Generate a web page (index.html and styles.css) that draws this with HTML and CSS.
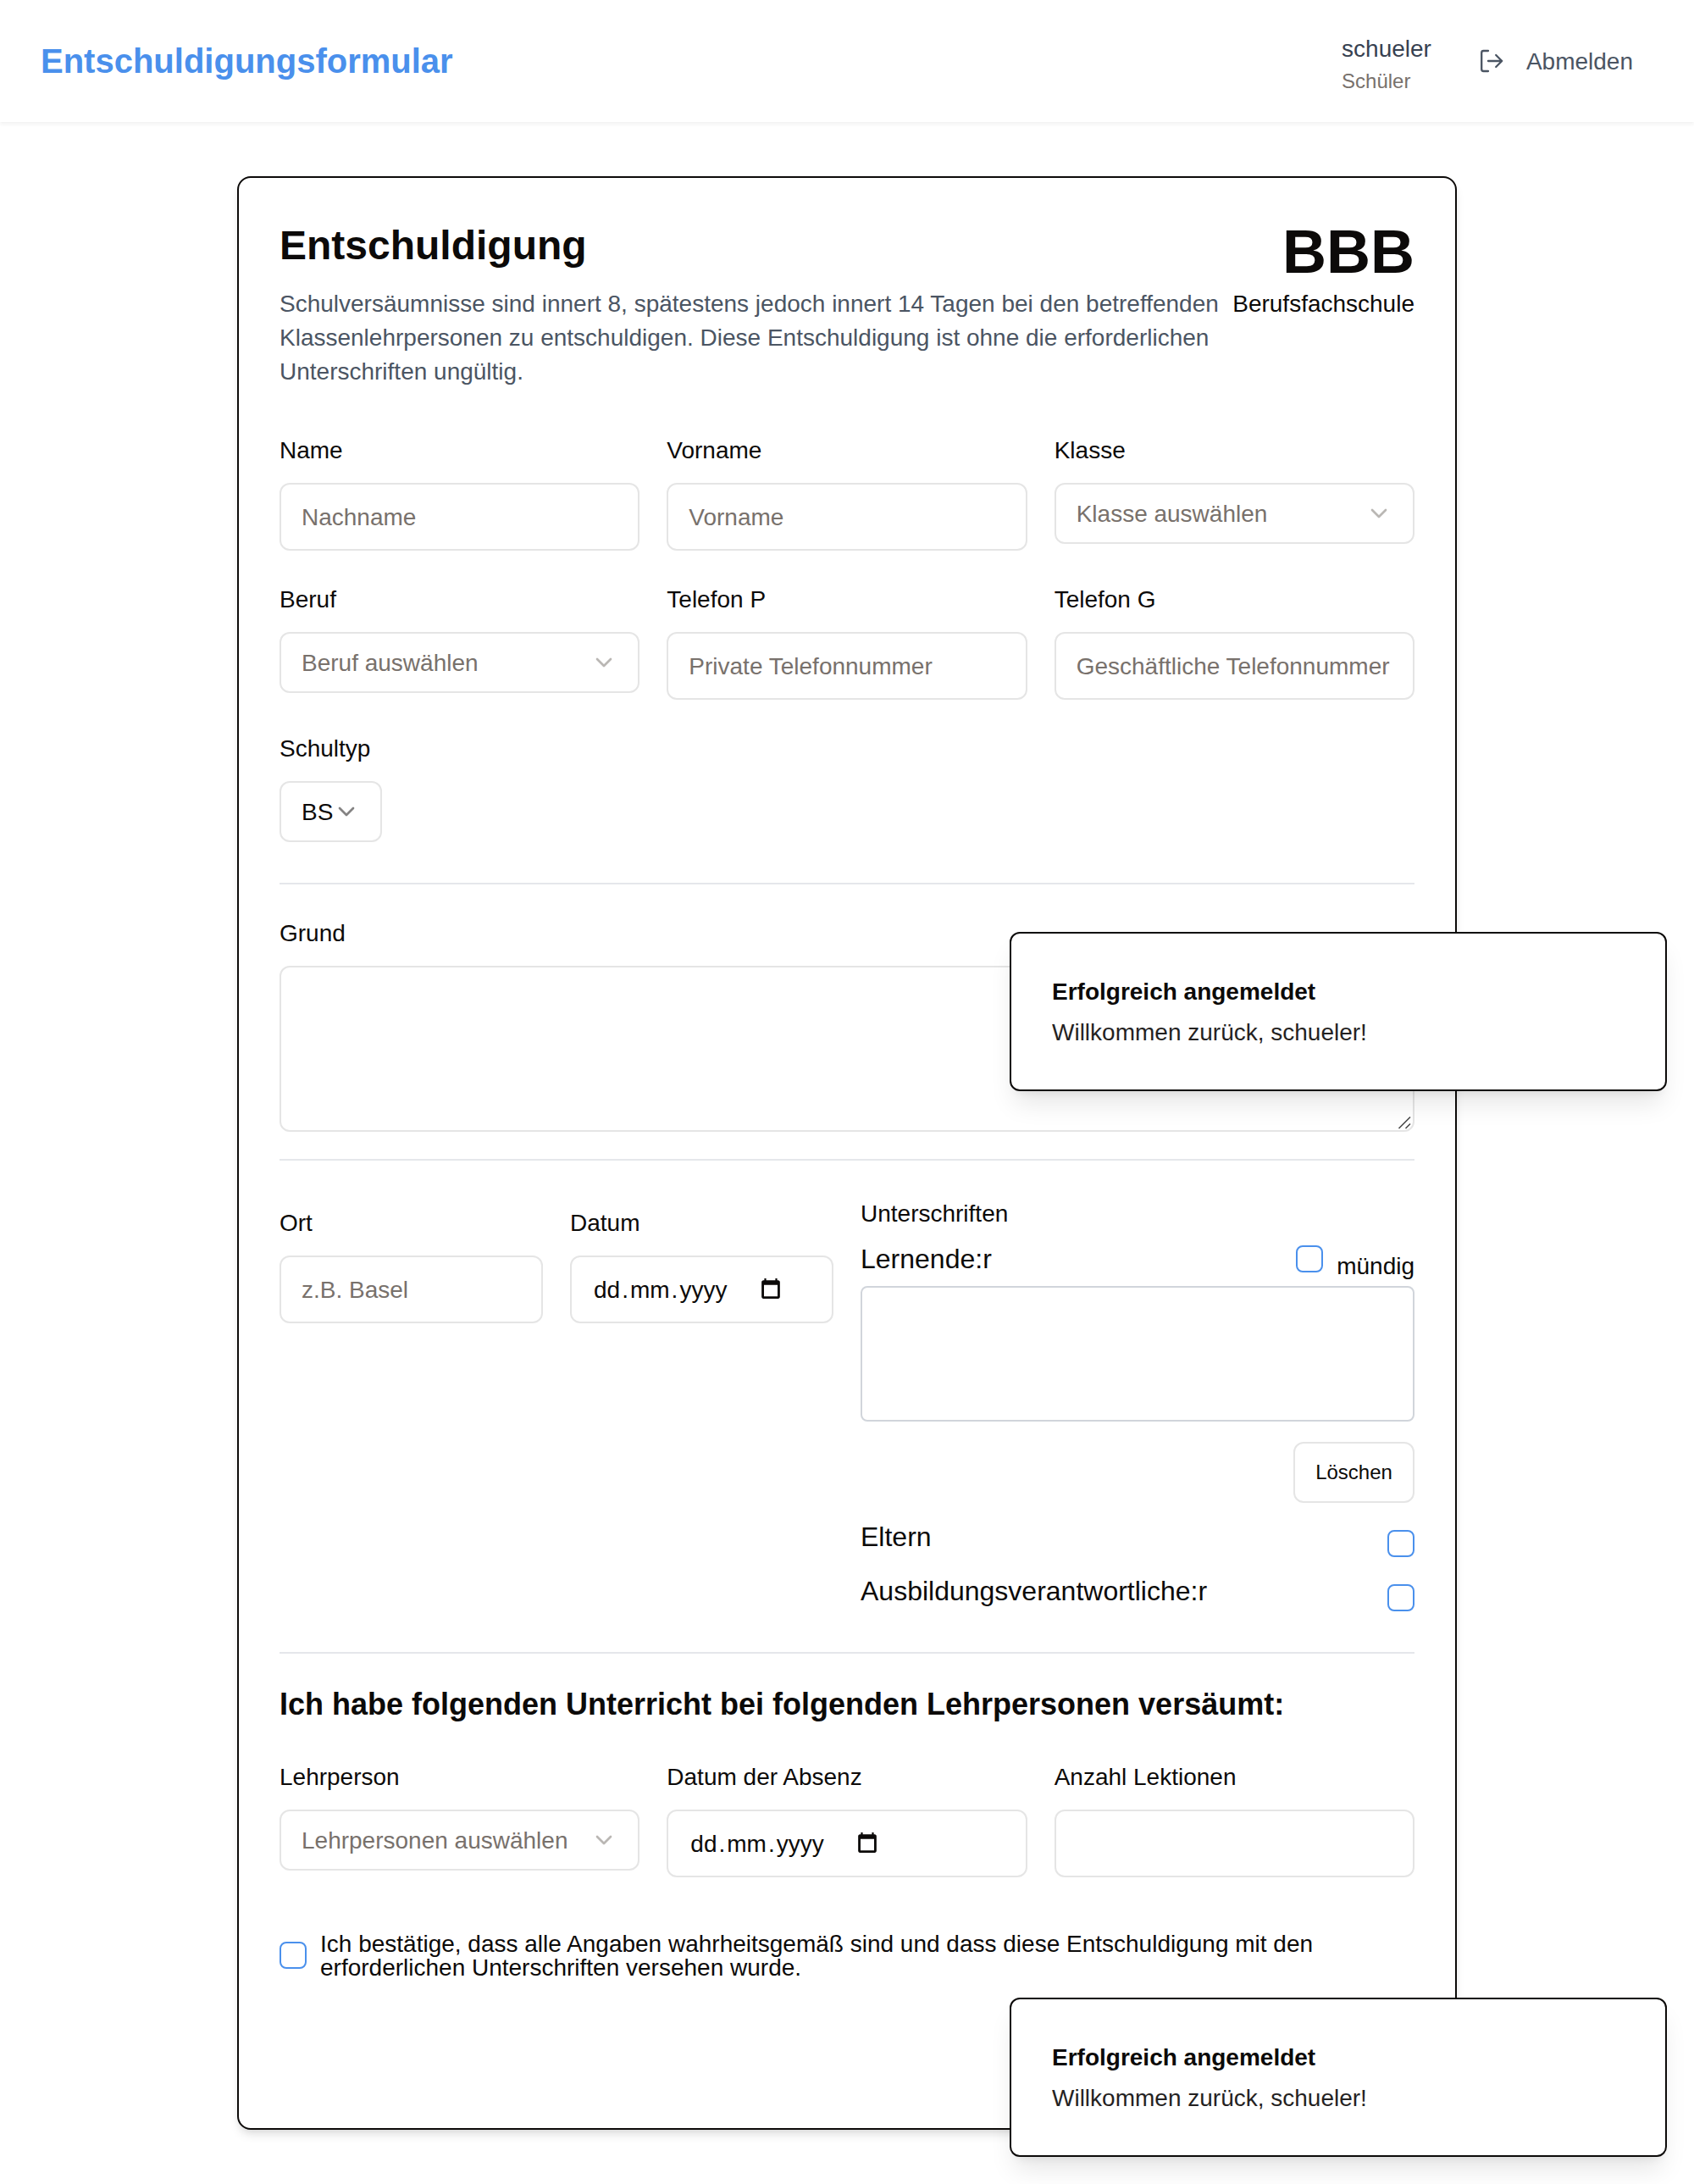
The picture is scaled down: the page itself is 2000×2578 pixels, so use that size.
FILE: index.html
```html
<!DOCTYPE html>
<html lang="de">
<head>
<meta charset="utf-8">
<title>Entschuldigungsformular</title>
<link rel="stylesheet" href="styles.css">
</head>
<body>
<svg class="sprite" width="0" height="0" aria-hidden="true">
  <symbol id="chevron" viewBox="0 0 24 24"><path d="m6 9 6 6 6-6" fill="none" stroke="currentColor" stroke-width="2" stroke-linecap="round" stroke-linejoin="round"/></symbol>
  <symbol id="calendar" viewBox="0 0 24 24"><path fill="currentColor" d="M20 3h-1V1h-2v2H7V1H5v2H4c-1.100 0-2 .9-2 2v16c0 1.100.9 2 2 2h16c1.100 0 2-.9 2-2V5c0-1.100-.9-2-2-2zm-.6 17.600H4.600V8h14.800v12.600z"/></symbol>
</svg>
<header class="topbar">
  <h1 class="brand">Entschuldigungsformular</h1>
  <div class="account">
    <div class="user"><span class="user-name">schueler</span><span class="user-role">Schüler</span></div>
    <button class="logout">
      <svg class="logout-icon" viewBox="0 0 32 32"><path fill="none" stroke="currentColor" stroke-width="2.300" stroke-linecap="round" stroke-linejoin="round" d="M11 4H5.500Q3.200 4 3.200 6.300V25.700Q3.200 28 5.500 28H11M11 16H27.200M20.200 9l7 7-7 7"/></svg>
      <span>Abmelden</span>
    </button>
  </div>
</header>

<main class="card">
  <div class="card-head">
    <div class="intro">
      <h2 class="title">Entschuldigung</h2>
      <p class="lead">Schulversäumnisse sind innert 8, spätestens jedoch innert 14 Tagen bei den betreffenden Klassenlehrpersonen zu entschuldigen. Diese Entschuldigung ist ohne die erforderlichen Unterschriften ungültig.</p>
    </div>
    <div class="school"><div class="school-logo">BBB</div><div class="school-name">Berufsfachschule</div></div>
  </div>

  <section class="grid three first">
    <div class="field"><div class="label"><label>Name</label></div><div class="input muted">Nachname</div></div>
    <div class="field"><div class="label"><label>Vorname</label></div><div class="input muted">Vorname</div></div>
    <div class="field"><div class="label"><label>Klasse</label></div><div class="select muted"><span>Klasse auswählen</span><svg class="chevron"><use href="#chevron"/></svg></div></div>
    <div class="field"><div class="label"><label>Beruf</label></div><div class="select muted"><span>Beruf auswählen</span><svg class="chevron"><use href="#chevron"/></svg></div></div>
    <div class="field"><div class="label"><label>Telefon P</label></div><div class="input muted">Private Telefonnummer</div></div>
    <div class="field"><div class="label"><label>Telefon G</label></div><div class="input muted">Geschäftliche Telefonnummer</div></div>
    <div class="field"><div class="label"><label>Schultyp</label></div><div class="select fit"><span>BS</span><svg class="chevron"><use href="#chevron"/></svg></div></div>
  </section>

  <section class="section reason">
    <div class="field">
      <div class="label"><label>Grund</label></div>
      <div class="textarea"><svg class="resizer" viewBox="0 0 16 16"><path d="M1.500 15 15 1.500M9.500 15 15 9.500" fill="none" stroke="#4a4a4a" stroke-width="1.600"/></svg></div>
    </div>
  </section>

  <section class="section signing">
    <div class="grid two place">
      <div class="field"><div class="label"><label>Ort</label></div><div class="input muted">z.B. Basel</div></div>
      <div class="field"><div class="label"><label>Datum</label></div><div class="input date"><span>dd</span>.<span>mm</span>.<span>yyyy</span><svg class="calendar"><use href="#calendar"/></svg></div></div>
    </div>
    <div class="signatures">
      <div class="sig-title">Unterschriften</div>
      <div class="sig-row"><span>Lernende:r</span><span class="adult"><span class="checkbox"></span><label class="adult-label">mündig</label></span></div>
      <div class="canvas"></div>
      <button class="clear">Löschen</button>
      <div class="sig-row parent"><span>Eltern</span><span class="checkbox"></span></div>
      <div class="sig-row trainer"><span>Ausbildungsverantwortliche:r</span><span class="checkbox"></span></div>
    </div>
  </section>

  <section class="section lessons">
    <h3 class="subtitle">Ich habe folgenden Unterricht bei folgenden Lehrpersonen versäumt:</h3>
    <div class="grid three">
      <div class="field"><div class="label"><label>Lehrperson</label></div><div class="select muted"><span>Lehrpersonen auswählen</span><svg class="chevron"><use href="#chevron"/></svg></div></div>
      <div class="field"><div class="label"><label>Datum der Absenz</label></div><div class="input date"><span>dd</span>.<span>mm</span>.<span>yyyy</span><svg class="calendar"><use href="#calendar"/></svg></div></div>
      <div class="field"><div class="label"><label>Anzahl Lektionen</label></div><div class="input"></div></div>
    </div>
    <div class="confirm"><span class="checkbox"></span><label class="confirm-label">Ich bestätige, dass alle Angaben wahrheitsgemäß sind und dass diese Entschuldigung mit den erforderlichen Unterschriften versehen wurde.</label></div>
  </section>
</main>

<div class="toast toast-upper"><div class="toast-title">Erfolgreich angemeldet</div><div class="toast-text">Willkommen zurück, schueler!</div></div>
<div class="toast toast-lower"><div class="toast-title">Erfolgreich angemeldet</div><div class="toast-text">Willkommen zurück, schueler!</div></div>
</body>
</html>
```
FILE: styles.css
```css
*, *::before, *::after { box-sizing: border-box; }
body {
  margin: 0;
  position: relative;
  height: 2578px;
  overflow: hidden;
  background: #fff;
  color: #0c0a09;
  font: 32px/48px "Liberation Sans", Helvetica, Arial, sans-serif;
}
h1, h2, h3, p { margin: 0; }
button { font-family: inherit; background: none; border: 0; padding: 0; }
.sprite { position: absolute; }

.topbar {
  height: 144px;
  padding: 0 48px;
  display: flex;
  align-items: center;
  justify-content: space-between;
  background: #fff;
  box-shadow: 0 3px 4px rgba(0, 0, 0, .05);
}
.brand { font-size: 40px; line-height: 56px; color: #4a90ec; }
.account { display: flex; align-items: center; gap: 56px; padding-right: 24px; }
.user { display: flex; flex-direction: column; }
.user-name { font-size: 28px; line-height: 44px; padding-top: 4px; color: #374151; }
.user-role { font-size: 24px; line-height: 32px; color: #78716c; }
.logout { display: flex; align-items: center; gap: 24px; font-size: 28px; line-height: 40px; color: #4b5563; }
.logout span { padding-top: 2px; }
.logout-icon { width: 32px; height: 32px; }

.card {
  width: 1440px;
  height: 2306px;
  margin: 64px auto 0;
  padding: 48px;
  border: 2px solid #0c0a09;
  border-radius: 16px;
  background: #fff;
  box-shadow: 0 8px 12px -2px rgba(0, 0, 0, .1), 0 4px 8px -4px rgba(0, 0, 0, .1);
}
.card-head { display: flex; justify-content: space-between; height: 200px; }
.title { font-size: 48px; line-height: 64px; margin-bottom: 17px; }
.lead { font-size: 28px; line-height: 40px; color: #4b5563; }
.school { flex: none; text-align: right; }
.school-logo { font-size: 72px; line-height: 78px; margin-bottom: 3px; font-weight: 700; }
.school-name { font-size: 28px; line-height: 40px; }

.grid { display: grid; gap: 32px; align-items: start; }
.three { grid-template-columns: repeat(3, minmax(0, 1fr)); }
.two { grid-template-columns: repeat(2, minmax(0, 1fr)); }
.first { margin-top: 48px; height: 488px; align-content: start; }
.field { display: flex; flex-direction: column; gap: 16px; }
.label { height: 48px; }
.label label { font-size: 28px; line-height: 28px; }
.input, .select, .textarea { border: 2px solid #e5e5e5; border-radius: 12px; font-size: 28px; line-height: 40px; background: #fff; white-space: nowrap; }
.input { height: 80px; padding: 19px 24px 17px; }
.select { height: 72px; padding: 0 24px; display: flex; align-items: center; justify-content: space-between; }
.select span { padding-top: 2px; }
.fit { width: fit-content; }
.muted { color: #78716c; }
.chevron { width: 32px; height: 32px; opacity: .5; }
.date { display: flex; align-items: center; }
.date span { padding: 0 2px; }
.calendar { width: 26px; height: 26px; margin: 0 0 4px 36.5px; }

.section { border-top: 2px solid #e5e7eb; }
.reason { margin-top: 48px; padding-top: 32px; }
.textarea { height: 196px; display: flex; align-items: flex-end; justify-content: flex-end; padding: 1px 2px; }
.resizer { width: 16px; height: 16px; }

.signing { margin-top: 32px; padding-top: 48px; display: grid; grid-template-columns: 1fr 1fr; gap: 32px; }
.signatures { display: flex; flex-direction: column; }
.sig-title { font-size: 28px; line-height: 28px; padding-top: 1px; margin-bottom: 15px; }
.sig-row { display: flex; justify-content: space-between; align-items: flex-end; height: 48px; }
.adult { display: flex; gap: 16px; height: 40px; }
.adult-label { font-size: 28px; line-height: 28px; padding-top: 11px; }
.checkbox { flex: none; width: 32px; height: 32px; border: 2px solid #4a90ec; border-radius: 8px; }
.canvas { height: 160px; margin: 8px 0 24px; border: 2px solid #d1d5db; border-radius: 8px; }
.clear { align-self: flex-end; width: 143px; height: 72px; border: 2px solid #e5e5e5; border-radius: 12px; font-size: 24px; line-height: 32px; color: #0c0a09; }
.parent, .trainer { margin-top: 16px; }

.lessons { margin-top: 48px; padding-top: 32px; }
.subtitle { font-size: 36px; line-height: 56px; margin-bottom: 32px; }
.confirm { margin-top: 64px; display: flex; align-items: center; gap: 16px; height: 56px; }
.confirm-label { font-size: 28px; line-height: 28px; padding-top: 2px; }

.toast {
  position: absolute;
  left: 1192px;
  width: 776px;
  height: 188px;
  padding: 49px 48px 47px;
  border: 2px solid #0c0a09;
  border-radius: 12px;
  background: #fff;
  font-size: 28px;
  line-height: 40px;
  box-shadow: 0 20px 30px -6px rgba(0, 0, 0, .1), 0 8px 12px -8px rgba(0, 0, 0, .1);
}
.toast-upper { top: 1100px; }
.toast-lower { top: 2358px; }
.toast-title { font-weight: 700; margin-bottom: 8px; }
.toast-text { opacity: .9; }
```
